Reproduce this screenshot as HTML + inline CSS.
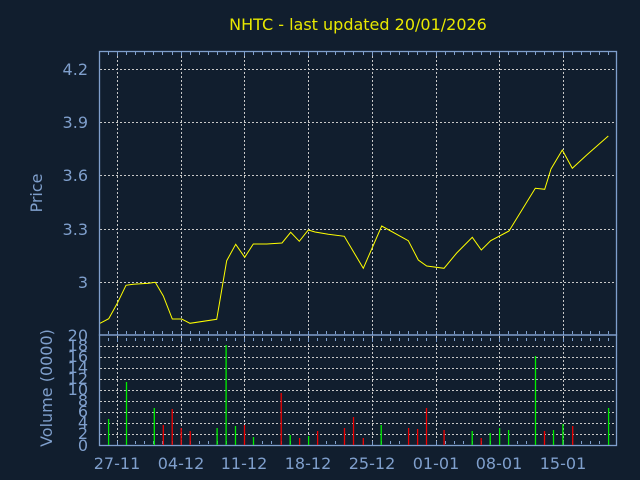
<!DOCTYPE html>
<html><head><style>
html,body{margin:0;padding:0;background:#111e2e;}
svg{display:block;}
text{font-family:"DejaVu Sans","Liberation Sans",sans-serif;}
</style></head><body>
<svg width="640" height="480" viewBox="0 0 640 480" xmlns="http://www.w3.org/2000/svg">
<rect width="640" height="480" fill="#111e2e"/>
<text x="358" y="30" fill="#e8e800" font-size="16" text-anchor="middle">NHTC - last updated 20/01/2026</text>
<g stroke="#c8c8c8" stroke-width="1" stroke-dasharray="2,2" fill="none">
<path d="M100 69.5H617M100 122.5H617M100 175.5H617M100 229.5H617M100 282.5H617"/>
<path d="M117.5 52V335M181.5 52V335M244.5 52V335M308.5 52V335M372.5 52V335M436.5 52V335M499.5 52V335M563.5 52V335"/>
<path d="M100 346.5H617M100 357.5H617M100 368.5H617M100 379.5H617M100 390.5H617M100 401.5H617M100 412.5H617M100 423.5H617M100 434.5H617"/>
<path d="M117.5 336V445M181.5 336V445M244.5 336V445M308.5 336V445M372.5 336V445M436.5 336V445M499.5 336V445M563.5 336V445"/>
</g>
<g stroke="#7f9fcc" stroke-width="1.3" fill="none">
<rect x="99.5" y="51.5" width="517" height="283.5"/>
<rect x="99.5" y="335" width="517" height="110.5"/>
</g>
<g stroke="#7f9fcc" stroke-width="1">
<path id="tk" d="M108.5 52v3M117.5 52v4M126.5 52v3M135.5 52v3M144.5 52v3M153.5 52v3M162.5 52v3M172.5 52v3M181.5 52v4M190.5 52v3M199.5 52v3M208.5 52v3M217.5 52v3M226.5 52v3M235.5 52v3M244.5 52v4M253.5 52v3M262.5 52v3M271.5 52v3M281.5 52v3M290.5 52v3M299.5 52v3M308.5 52v4M317.5 52v3M326.5 52v3M335.5 52v3M344.5 52v3M353.5 52v3M363.5 52v3M372.5 52v4M381.5 52v3M390.5 52v3M399.5 52v3M408.5 52v3M417.5 52v3M426.5 52v3M436.5 52v4M445.5 52v3M454.5 52v3M463.5 52v3M472.5 52v3M481.5 52v3M490.5 52v3M499.5 52v4M508.5 52v3M517.5 52v3M526.5 52v3M535.5 52v3M544.5 52v3M553.5 52v3M563.5 52v4M572.5 52v3M581.5 52v3M590.5 52v3M599.5 52v3M608.5 52v3"/>
<use href="#tk" transform="translate(0,279)"/>
<use href="#tk" transform="translate(0,286)"/>
<use href="#tk" transform="translate(0,389)"/>
</g>
<polyline fill="none" stroke="#ffff00" stroke-width="1" points="100,323.3 108.7,318.7 117.3,303.3 126,285.3 133.3,284.3 148.7,283.3 155.3,282.3 163.3,296 172.3,319 181.7,319 190,323.3 216.7,319.3 221.7,290 226.7,260.7 235.7,244.3 244.7,257.3 253.3,244 266.7,244 282,243 290.7,232.3 299.3,241.3 308.3,230 315,232 328.3,234.3 344.3,236.3 363.3,268.3 381.7,226 408.3,240.7 418.3,260 426.7,266 444,268.3 456.7,253 472.3,237.3 481.3,250 490.7,240.7 509,231 535.3,188.3 544.7,189.3 551,169 562.3,150 572.3,168.3 586.7,155 608.3,136"/>
<g stroke-width="1.3">
<g stroke="#00ee00">
<path d="M108.6 445V419M126.5 445V382M154.3 445V408M217.1 445V428M226.1 445V345M235.5 445V426M253.5 445V437M290.2 445V435M308.6 445V436M381.2 445V425M472.2 445V431M490.2 445V433M499.6 445V428M508.6 445V430M535.5 445V356M553.5 445V430M562.9 445V424M608.6 445V408"/>
</g>
<g stroke="#ee0000">
<path d="M163.3 445V425M172.2 445V409M181.2 445V428M190.2 445V431M244.5 445V425M281.2 445V393M299.6 445V438M317.6 445V431M344.5 445V428M353.5 445V417M363.3 445V438M408.6 445V428M417.6 445V429M426.5 445V408M444.1 445V430M481.2 445V438M544.5 445V431M572.7 445V426"/>
</g>
</g>
<g fill="#7f9fcc" font-size="16" text-anchor="end">
<text x="88" y="75">4.2</text>
<text x="88" y="128">3.9</text>
<text x="88" y="181">3.6</text>
<text x="88" y="235">3.3</text>
<text x="88" y="288">3</text>
<text x="88" y="341">20</text>
<text x="88" y="351">18</text>
<text x="88" y="362">16</text>
<text x="88" y="373">14</text>
<text x="88" y="384">12</text>
<text x="88" y="395">10</text>
<text x="88" y="406">8</text>
<text x="88" y="417">6</text>
<text x="88" y="428">4</text>
<text x="88" y="439">2</text>
<text x="88" y="451">0</text>
</g>
<g fill="#7f9fcc" font-size="16" text-anchor="middle">
<text x="117" y="469">27-11</text>
<text x="181" y="469">04-12</text>
<text x="244" y="469">11-12</text>
<text x="308" y="469">18-12</text>
<text x="372" y="469">25-12</text>
<text x="436" y="469">01-01</text>
<text x="499" y="469">08-01</text>
<text x="563" y="469">15-01</text>
<text transform="translate(42,193) rotate(-90)">Price</text>
<text transform="translate(52,388) rotate(-90)">Volume (0000)</text>
</g>
</svg>
</body></html>
